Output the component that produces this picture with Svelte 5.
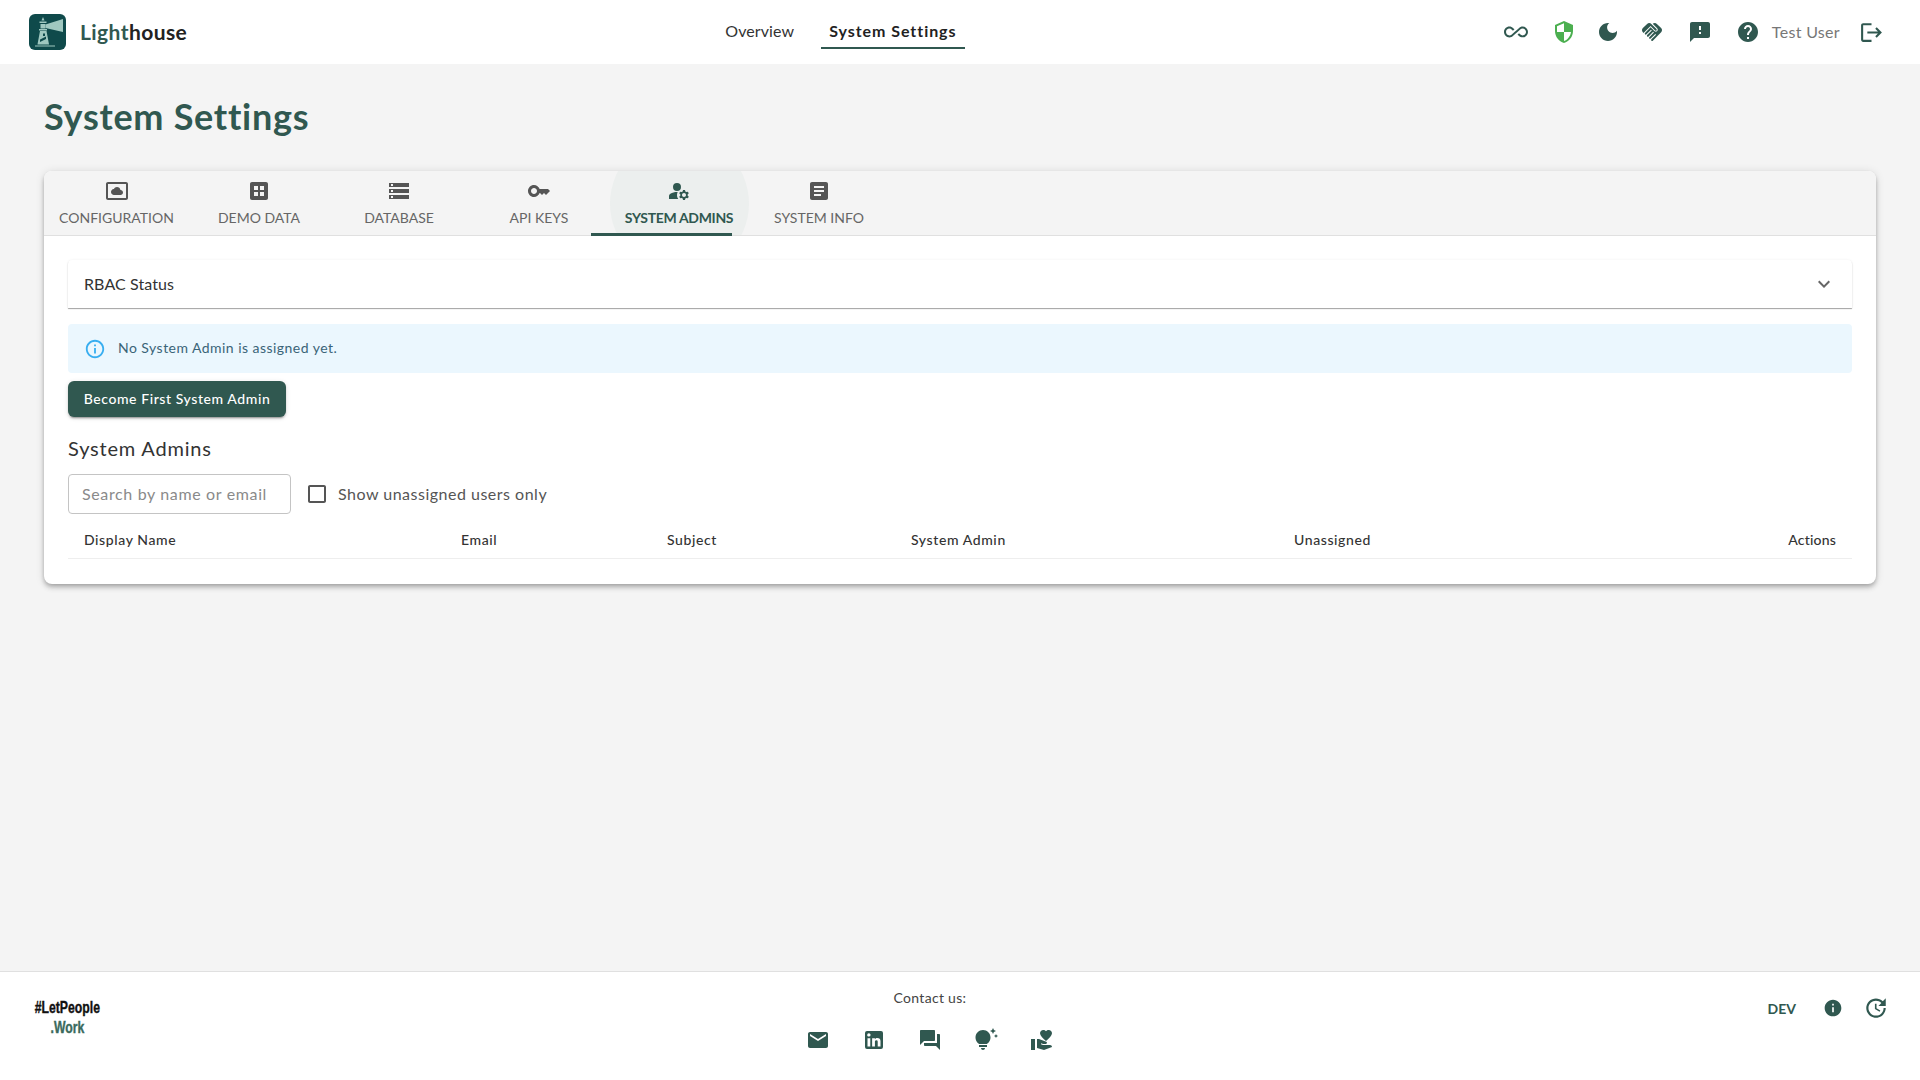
<script>
  const tabs = [
    { label: "Configuration", d: "M9 16h6.5c1.38 0 2.5-1.12 2.5-2.5S16.88 11 15.5 11h-.05c-.24-1.69-1.69-3-3.45-3-1.4 0-2.6.83-3.16 2.02h-.16C7.17 10.18 6 11.45 6 13c0 1.66 1.34 3 3 3zM21 3H3c-1.1 0-2 .9-2 2v14c0 1.1.9 2 2 2h18c1.1 0 2-.9 2-2V5c0-1.1-.9-2-2-2zm0 16.01H3V4.99h18v14.02z" },
    { label: "Demo Data", d: "M19 3H5c-1.1 0-2 .9-2 2v14c0 1.1.9 2 2 2h14c1.1 0 2-.9 2-2V5c0-1.1-.9-2-2-2zm-8 14H7v-4h4v4zm0-6H7V7h4v4zm6 6h-4v-4h4v4zm0-6h-4V7h4v4z" },
    { label: "Database", d: "M2 20h20v-4H2v4zm2-3h2v2H4v-2zM2 4v4h20V4H2zm4 3H4V5h2v2zm-4 7h20v-4H2v4zm2-3h2v2H4v-2z" },
    { label: "API Keys", d: "M21 10h-8.35C11.83 7.67 9.61 6 7 6c-3.31 0-6 2.69-6 6s2.69 6 6 6c2.61 0 4.83-1.67 5.65-4H13l2 2 2-2 2 2 4-4.04L21 10zM7 15c-1.65 0-3-1.35-3-3s1.35-3 3-3 3 1.35 3 3-1.35 3-3 3z" },
    { label: "System Admins", active: true, d: "M10.67 13.02c-.22-.01-.44-.02-.67-.02-2.42 0-4.68.67-6.61 1.82-.88.52-1.39 1.5-1.39 2.53V20h9.26c-.79-1.13-1.26-2.51-1.26-4 0-1.07.25-2.07.67-2.98zM10 4a4 4 0 1 0 0 8 4 4 0 0 0 0-8zM20.75 16c0-.22-.03-.42-.06-.63l1.14-1.01-1-1.73-1.45.49c-.32-.27-.68-.48-1.08-.63L18 11h-2l-.3 1.49c-.4.15-.76.36-1.08.63l-1.45-.49-1 1.73 1.14 1.01c-.03.21-.06.41-.06.63s.03.42.06.63l-1.14 1.01 1 1.73 1.45-.49c.32.27.68.48 1.08.63L16 21h2l.3-1.49c.4-.15.76-.36 1.08-.63l1.45.49 1-1.73-1.14-1.01c.03-.21.06-.41.06-.63zM17 18c-1.1 0-2-.9-2-2s.9-2 2-2 2 .9 2 2-.9 2-2 2z" },
    { label: "System Info", d: "M19 3H5c-1.1 0-2 .9-2 2v14c0 1.1.9 2 2 2h14c1.1 0 2-.9 2-2V5c0-1.1-.9-2-2-2zm-5 14H7v-2h7v2zm3-4H7v-2h10v2zm0-4H7V7h10v2z" }
  ];

  const headerIcons = [
    { name: "infinity", d: "M18.6 6.62c-1.44 0-2.8.56-3.77 1.53L12 10.66 10.48 12h.01L7.8 14.39c-.64.64-1.49.99-2.4.99-1.87 0-3.39-1.51-3.39-3.38S3.53 8.62 5.4 8.62c.91 0 1.76.35 2.44 1.03l1.13 1 1.51-1.34L9.22 8.2C8.2 7.18 6.84 6.62 5.4 6.62 2.42 6.62 0 9.04 0 12s2.42 5.38 5.4 5.38c1.44 0 2.8-.56 3.77-1.53l2.83-2.5.01.01L13.52 12h-.01l2.69-2.39c.64-.64 1.49-.99 2.4-.99 1.87 0 3.39 1.51 3.39 3.38s-1.52 3.38-3.39 3.38c-.9 0-1.76-.35-2.44-1.03l-1.14-1.01-1.51 1.34 1.27 1.12c1.02 1.01 2.37 1.57 3.82 1.57 2.98 0 5.4-2.41 5.4-5.38s-2.42-5.37-5.4-5.37z" },
    { name: "shield", d: "M12 1 3 5v6c0 5.55 3.84 10.74 9 12 5.16-1.26 9-6.45 9-12V5l-9-4zm0 10.99h7c-.53 4.12-3.28 7.79-7 8.94V12H5V6.3l7-3.11v8.8z" },
    { name: "moon", d: "M12 3c-4.97 0-9 4.03-9 9s4.03 9 9 9 9-4.03 9-9c0-.46-.04-.92-.1-1.36-.98 1.37-2.58 2.26-4.4 2.26-2.98 0-5.4-2.42-5.4-5.4 0-1.81.89-3.42 2.26-4.4-.44-.06-.9-.1-1.36-.1z" },
    { name: "shake", d: "M16.48 10.41c-.39.39-1.04.39-1.43 0l-4.47-4.46-7.05 7.04-.66-.63c-1.17-1.17-1.17-3.07 0-4.24l4.24-4.24c1.17-1.17 3.07-1.17 4.24 0L16.48 9c.39.39.39 1.02 0 1.41zm.7-2.12c.78.78.78 2.05 0 2.83-1.27 1.27-2.61.22-2.83 0l-3.76-3.76-5.57 5.57c-.39.39-.39 1.02 0 1.41.39.39 1.02.39 1.42 0l4.62-4.62.71.71-4.62 4.62c-.39.39-.39 1.02 0 1.41.39.39 1.02.39 1.42 0l4.62-4.62.71.71-4.62 4.62c-.39.39-.39 1.02 0 1.41.39.39 1.02.39 1.41 0l4.62-4.62.71.71-4.62 4.62c-.39.39-.39 1.02 0 1.41.39.39 1.02.39 1.41 0l8.32-8.34c1.17-1.17 1.17-3.07 0-4.24l-4.24-4.24c-1.15-1.15-3.01-1.17-4.18-.06l4.47 4.47z" },
    { name: "feedback", d: "M20 2H4c-1.1 0-1.99.9-1.99 2L2 22l4-4h14c1.1 0 2-.9 2-2V4c0-1.1-.9-2-2-2zm-7 12h-2v-2h2v2zm0-4h-2V6h2v4z" },
    { name: "help", d: "M12 2C6.48 2 2 6.48 2 12s4.48 10 10 10 10-4.48 10-10S17.52 2 12 2zm1 17h-2v-2h2v2zm2.07-7.75-.9.92C13.45 12.9 13 13.5 13 15h-2v-.5c0-1.1.45-2.1 1.17-2.83l1.24-1.26c.37-.36.59-.86.59-1.41 0-1.1-.9-2-2-2s-2 .9-2 2H8c0-2.21 1.79-4 4-4s4 1.79 4 4c0 .88-.36 1.68-.93 2.25z" }
  ];

  const contactIcons = [
    "M20 4H4c-1.1 0-1.99.9-1.99 2L2 18c0 1.1.9 2 2 2h16c1.1 0 2-.9 2-2V6c0-1.1-.9-2-2-2zm0 4-8 5-8-5V6l8 5 8-5v2z",
    "M19 3a2 2 0 0 1 2 2v14a2 2 0 0 1-2 2H5a2 2 0 0 1-2-2V5a2 2 0 0 1 2-2h14m-.5 15.5v-5.3a3.26 3.26 0 0 0-3.26-3.26c-.85 0-1.84.52-2.32 1.3v-1.11h-2.79v8.37h2.79v-4.93c0-.77.62-1.4 1.39-1.4a1.4 1.4 0 0 1 1.4 1.4v4.93h2.79M6.88 8.56a1.68 1.68 0 0 0 1.68-1.68c0-.93-.75-1.69-1.68-1.69a1.69 1.69 0 0 0-1.69 1.69c0 .93.76 1.68 1.69 1.68m1.39 9.94v-8.37H5.5v8.37h2.77z",
    "M21 6h-2v9H6v2c0 .55.45 1 1 1h11l4 4V7c0-.55-.45-1-1-1zm-4 6V3c0-.55-.45-1-1-1H3c-.55 0-1 .45-1 1v14l4-4h10c.55 0 1-.45 1-1z",
    "M7 20h4c0 1.1-.9 2-2 2s-2-.9-2-2zm-2-1h8v-2H5v2zm11.5-9.5c0 3.82-2.66 5.86-3.77 6.5H5.27c-1.11-.64-3.77-2.68-3.77-6.5C1.5 5.36 4.86 2 9 2s7.5 3.36 7.5 7.5zm4.87-2.13L20 8l1.37.63L22 10l.63-1.37L24 8l-1.37-.63L22 6l-.63 1.37zM19 6l.94-2.06L22 3l-2.06-.94L19 0l-.94 2.06L16 3l2.06.94L19 6z",
    "M1 11h4v11H1zm15-7.75C16.65 2.49 17.66 2 18.7 2 20.55 2 22 3.45 22 5.3c0 2.27-2.91 4.9-6 7.7-3.09-2.81-6-5.44-6-7.7C10 3.45 11.45 2 13.3 2c1.04 0 2.05.49 2.7 1.25zM20 17h-7l-2.09-.73.33-.94L13 16h2.82c.65 0 1.18-.53 1.18-1.18 0-.49-.31-.93-.77-1.11L8.97 11H7v9.02L14 22l8.01-3c-.01-1.1-.9-2-2.01-2z"
  ];

  const columns = ["Display Name", "Email", "Subject", "System Admin", "Unassigned", "Actions"];
</script>

<div class="page">
  <header class="topbar">
    <div class="brand">
      <svg class="logo" viewBox="0 0 37 36">
        <rect width="37" height="36" rx="6" fill="#0f4a4b" />
        <path d="M16.500 10.500 34 5v13l-17.500-4z" fill="#a0c8c0" />
        <path d="M12.500 6.500 14 3l1.500 3.500zM10.500 7.500h7v1.500h-7zM11.500 10h5v4.500h-5zM10 15h8v1.500h-8z" fill="#a0c8c0" />
        <path d="M11 17h6.500L20 30.500H8.500z" fill="#a0c8c0" />
        <path d="M14 19.500h2v2.500h-2zM11 25.500l6-3v2.500l-6 3z" fill="#0f4a4b" />
        <rect x="6" y="31.500" width="20" height="1" fill="#a0c8c0" />
      </svg>
      <span class="brand-name"><span class="light">Light</span>house</span>
    </div>

    <nav class="mainnav">
      <span class="navlink">Overview</span>
      <span class="navlink current">System Settings</span>
    </nav>

    <div class="tools">
      {#each headerIcons as icon}
        <svg class="tool tool-{icon.name}" viewBox="0 0 24 24"><path d={icon.d} /></svg>
      {/each}
      <span class="username">Test User</span>
      <svg class="tool tool-logout" viewBox="0 0 24 24"><path d="m17 7-1.41 1.41L18.170 11H8v2h10.170l-2.580 2.580L17 17l5-5zM4 5h8V3H4c-1.100 0-2 .9-2 2v14c0 1.100.9 2 2 2h8v-2H4V5z" /></svg>
    </div>
  </header>

  <main class="content">
    <h1>System Settings</h1>

    <section class="card">
      <div class="tabbar">
        {#each tabs as tab}
          <div class="tab" class:active={tab.active}>
            <svg viewBox="0 0 24 24"><path d={tab.d} /></svg>
            <span>{tab.label}</span>
          </div>
        {/each}
        <div class="indicator"></div>
      </div>

      <div class="panel">
        <div class="accordion">
          <span>RBAC Status</span>
          <svg viewBox="0 0 24 24"><path d="M16.590 8.590 12 13.170 7.410 8.590 6 10l6 6 6-6z" /></svg>
        </div>

        <div class="alert">
          <svg viewBox="0 0 24 24"><path d="M11 7h2v2h-2zm0 4h2v6h-2zm1-9C6.480 2 2 6.480 2 12s4.480 10 10 10 10-4.480 10-10S17.520 2 12 2zm0 18c-4.410 0-8-3.590-8-8s3.590-8 8-8 8 3.590 8 8-3.590 8-8 8z" /></svg>
          <span>No System Admin is assigned yet.</span>
        </div>

        <button class="primary">Become First System Admin</button>

        <h2>System Admins</h2>

        <div class="filters">
          <input class="search" placeholder="Search by name or email" />
          <label class="check">
            <svg viewBox="0 0 24 24"><path d="M19 5v14H5V5h14m0-2H5c-1.100 0-2 .9-2 2v14c0 1.100.9 2 2 2h14c1.100 0 2-.9 2-2V5c0-1.100-.9-2-2-2z" /></svg>
            <span>Show unassigned users only</span>
          </label>
        </div>

        <table>
          <thead>
            <tr>
              {#each columns as col}
                <th>{col}</th>
              {/each}
            </tr>
          </thead>
        </table>
      </div>
    </section>
  </main>

  <footer class="footer">
    <div class="tagline">
      <span class="tag-top">#LetPeople</span>
      <span class="tag-bottom">.Work</span>
    </div>

    <div class="contact">
      <span>Contact us:</span>
      <div class="contact-icons">
        {#each contactIcons as d}
          <svg viewBox="0 0 24 24"><path {d} /></svg>
        {/each}
      </div>
    </div>

    <div class="version">
      <span class="env">DEV</span>
      <svg class="info" viewBox="0 0 24 24"><path d="M12 2C6.480 2 2 6.480 2 12s4.480 10 10 10 10-4.480 10-10S17.520 2 12 2zm1 15h-2v-6h2v6zm0-8h-2V7h2v2z" /></svg>
      <svg class="update" viewBox="0 0 24 24"><path d="M21 10.120h-6.780l2.740-2.820c-2.730-2.700-7.150-2.800-9.880-.1-2.730 2.710-2.730 7.080 0 9.790s7.150 2.710 9.880 0C18.320 15.650 19 14.080 19 12.100h2c0 1.980-.88 4.550-2.640 6.290-3.510 3.480-9.210 3.480-12.720 0-3.500-3.470-3.530-9.110-.02-12.580s9.140-3.470 12.650 0L21 3v7.120zM12.500 8v4.250l3.500 2.080-.72 1.210L11 13V8h1.500z" /></svg>
    </div>
  </footer>
</div>

<style>
  :global(body) {
    margin: 0;
    background: #f4f4f4;
    font-family: Lato, "Open Sans", sans-serif;
    color: #262626;
  }

  svg {
    display: block;
    fill: #305850;
    flex: none;
  }

  .page {
    display: flex;
    flex-direction: column;
    min-height: 100vh;
  }

  /* top bar */
  .topbar {
    display: flex;
    align-items: center;
    height: 64px;
    background: #fff;
    position: relative;
    padding: 0 29px;
    box-sizing: border-box;
  }

  .brand {
    display: flex;
    align-items: center;
    gap: 14px;
  }

  .logo {
    width: 37px;
    height: 36px;
  }

  .brand-name {
    font-size: 21px;
    font-weight: 700;
    letter-spacing: 0.02em;
    color: #222;
    padding-bottom: 2px;
  }

  .light {
    color: #305850;
  }

  .mainnav {
    display: flex;
    margin-left: 530px;
    gap: 19px;
    align-self: stretch;
    align-items: center;
  }

  .navlink {
    font-size: 16px;
    letter-spacing: 0.1px;
    color: #333;
    padding: 0 8px;
    height: 33px;
    line-height: 30px;
    box-sizing: border-box;
  }

  .navlink.current {
    font-weight: 700;
    letter-spacing: 0.95px;
    color: #222;
    border-bottom: 2px solid #305850;
    height: 33px;
    margin-top: 1px;
  }

  .tools {
    display: flex;
    align-items: center;
    margin-left: auto;
    margin-right: 7px;
  }

  .tool {
    width: 24px;
    height: 24px;
    margin-right: 20px;
  }

  .tool-infinity {
    margin-right: 24px;
  }

  .tool-shield {
    fill: #4caf50;
  }

  .tool-shake,
  .tool-feedback {
    margin-right: 24px;
  }

  .tool-help {
    margin-right: 12px;
  }

  .tool-logout {
    margin: 0 0 0 19px;
    width: 25px;
    height: 25px;
  }

  .username {
    font-size: 16px;
    color: #777;
    letter-spacing: 0.02em;
    padding-bottom: 2px;
  }

  /* page content */
  .content {
    flex: 1;
    padding: 32px 44px 0;
  }

  h1 {
    margin: 0 0 34px;
    font-size: 36px;
    line-height: 41px;
    font-weight: 700;
    letter-spacing: 0.02em;
    color: #305850;
  }

  .card {
    background: #fff;
    border-radius: 8px;
    overflow: hidden;
    box-shadow: 0 2px 4px -1px rgba(0, 0, 0, 0.2), 0 4px 5px rgba(0, 0, 0, 0.14), 0 1px 10px rgba(0, 0, 0, 0.12);
  }

  .tabbar {
    display: flex;
    position: relative;
    background: #f4f4f4;
    border-bottom: 1px solid #e0e0e0;
  }

  .tab {
    position: relative;
    overflow: hidden;
    width: 140px;
    height: 64px;
    display: flex;
    flex-direction: column;
    align-items: center;
    padding-top: 8px;
    box-sizing: border-box;
    color: #666;
  }

  .tab:first-child {
    width: 145px;
  }

  .tab svg {
    position: relative;
    width: 24px;
    height: 24px;
    fill: #555;
  }

  .tab span {
    position: relative;
    margin-top: 5px;
    font-size: 14px;
    line-height: 20px;
    text-transform: uppercase;
    letter-spacing: 0;
    white-space: nowrap;
  }

  .tab.active span {
    color: #305850;
    font-weight: 700;
    letter-spacing: -0.33px;
  }

  .tab.active svg {
    fill: #305850;
  }

  .tab.active::before {
    content: "";
    position: absolute;
    left: 1px;
    top: -37px;
    width: 139px;
    height: 139px;
    border-radius: 50%;
    background: #ecefee;
  }

  .indicator {
    position: absolute;
    left: 547px;
    bottom: -1px;
    width: 141px;
    height: 3px;
    background: #305850;
  }

  .panel {
    padding: 24px 24px 25px;
  }

  .accordion {
    display: flex;
    align-items: center;
    justify-content: space-between;
    height: 48px;
    padding: 0 16px;
    border-radius: 4px 4px 0 0;
    box-shadow: 0 1px 1px rgba(0, 0, 0, 0.35), 0 0 3px rgba(0, 0, 0, 0.06);
    font-size: 16px;
    letter-spacing: 0.1px;
    color: #333;
  }

  .accordion span {
    padding-bottom: 2px;
  }

  .accordion svg {
    width: 24px;
    height: 24px;
    fill: #666;
  }

  .alert {
    display: flex;
    align-items: center;
    gap: 12px;
    height: 49px;
    margin-top: 16px;
    padding: 0 16px;
    background: #ebf7fe;
    border-radius: 4px;
    font-size: 14px;
    letter-spacing: 0.46px;
    color: #3a6478;
  }

  .alert span {
    padding-bottom: 2px;
  }

  .alert svg {
    width: 22px;
    height: 22px;
    fill: #38aef0;
  }

  .primary {
    display: block;
    height: 36px;
    width: 218px;
    margin-top: 8px;
    padding: 0 0 2px;
    border: 0;
    border-radius: 6px;
    background: #305850;
    color: #fff;
    font: 500 14px Lato, sans-serif;
    letter-spacing: 0.58px;
    box-shadow: 0 3px 1px -2px rgba(0, 0, 0, 0.2), 0 2px 2px rgba(0, 0, 0, 0.14), 0 1px 5px rgba(0, 0, 0, 0.12);
  }

  h2 {
    margin: 16px 0 11px;
    font-size: 20px;
    line-height: 30px;
    font-weight: 400;
    letter-spacing: 0.04em;
    color: #333;
  }

  .filters {
    display: flex;
    align-items: center;
  }

  .search {
    width: 223px;
    height: 40px;
    box-sizing: border-box;
    padding: 0 13px 2px;
    border: 1px solid #c4c4c4;
    border-radius: 4px;
    outline: none;
    background: #fff;
    font: 16px Lato, sans-serif;
    letter-spacing: 0.64px;
  }

  .search::placeholder {
    color: #8a8a8a;
    opacity: 1;
  }

  .check {
    display: flex;
    align-items: center;
    margin-left: 14px;
    font-size: 16px;
    letter-spacing: 0.5px;
    color: #555;
  }

  .check span {
    padding-bottom: 2px;
  }

  .check svg {
    width: 24px;
    height: 24px;
    margin-right: 9px;
    fill: #555;
  }

  table {
    width: 100%;
    margin-top: 8px;
    border-collapse: collapse;
    table-layout: fixed;
  }

  th {
    height: 36px;
    padding: 0 16px;
    box-sizing: border-box;
    border-bottom: 1px solid #eeeeee;
    font-size: 14px;
    font-weight: 500;
    letter-spacing: 0.6px;
    text-align: left;
    color: #333;
  }

  th:nth-child(1) {
    width: 377px;
  }

  th:nth-child(2) {
    width: 206px;
  }

  th:nth-child(3) {
    width: 244px;
  }

  th:nth-child(4) {
    width: 383px;
  }

  th:nth-child(5) {
    width: 400px;
  }

  th:nth-child(6) {
    text-align: right;
    letter-spacing: 0.2px;
  }

  /* footer */
  .footer {
    height: 109px;
    box-sizing: border-box;
    display: flex;
    justify-content: space-between;
    align-items: flex-start;
    position: relative;
    background: #fff;
    border-top: 1px solid #e0e0e0;
    padding: 0 31px 0 35px;
  }

  .tagline {
    display: flex;
    flex-direction: column;
    align-items: center;
    width: 64px;
    margin-top: 26px;
    font-family: "Liberation Sans", sans-serif;
    font-weight: 700;
    font-size: 17px;
    line-height: 20px;
  }

  .tag-top,
  .tag-bottom {
    display: block;
    transform: scaleX(0.72);
    white-space: nowrap;
    color: #111;
    -webkit-text-stroke: 0.4px currentColor;
  }

  .tag-bottom {
    color: #3a6a5d;
  }

  .contact {
    position: absolute;
    left: 0;
    right: 60px;
    top: 17px;
    display: flex;
    flex-direction: column;
    align-items: center;
    font-size: 14px;
    letter-spacing: 0.3px;
    color: #444;
    pointer-events: none;
  }

  .contact-icons {
    display: flex;
    gap: 32px;
    margin-top: 22px;
  }

  .contact-icons svg {
    width: 24px;
    height: 24px;
  }

  .version {
    display: flex;
    align-items: center;
    margin-top: 23px;
  }

  .env {
    font-size: 14px;
    font-weight: 700;
    color: #305850;
  }

  .info {
    width: 20px;
    height: 20px;
    margin-left: 27px;
  }

  .update {
    width: 26px;
    height: 26px;
    margin-left: 20px;
  }
</style>
